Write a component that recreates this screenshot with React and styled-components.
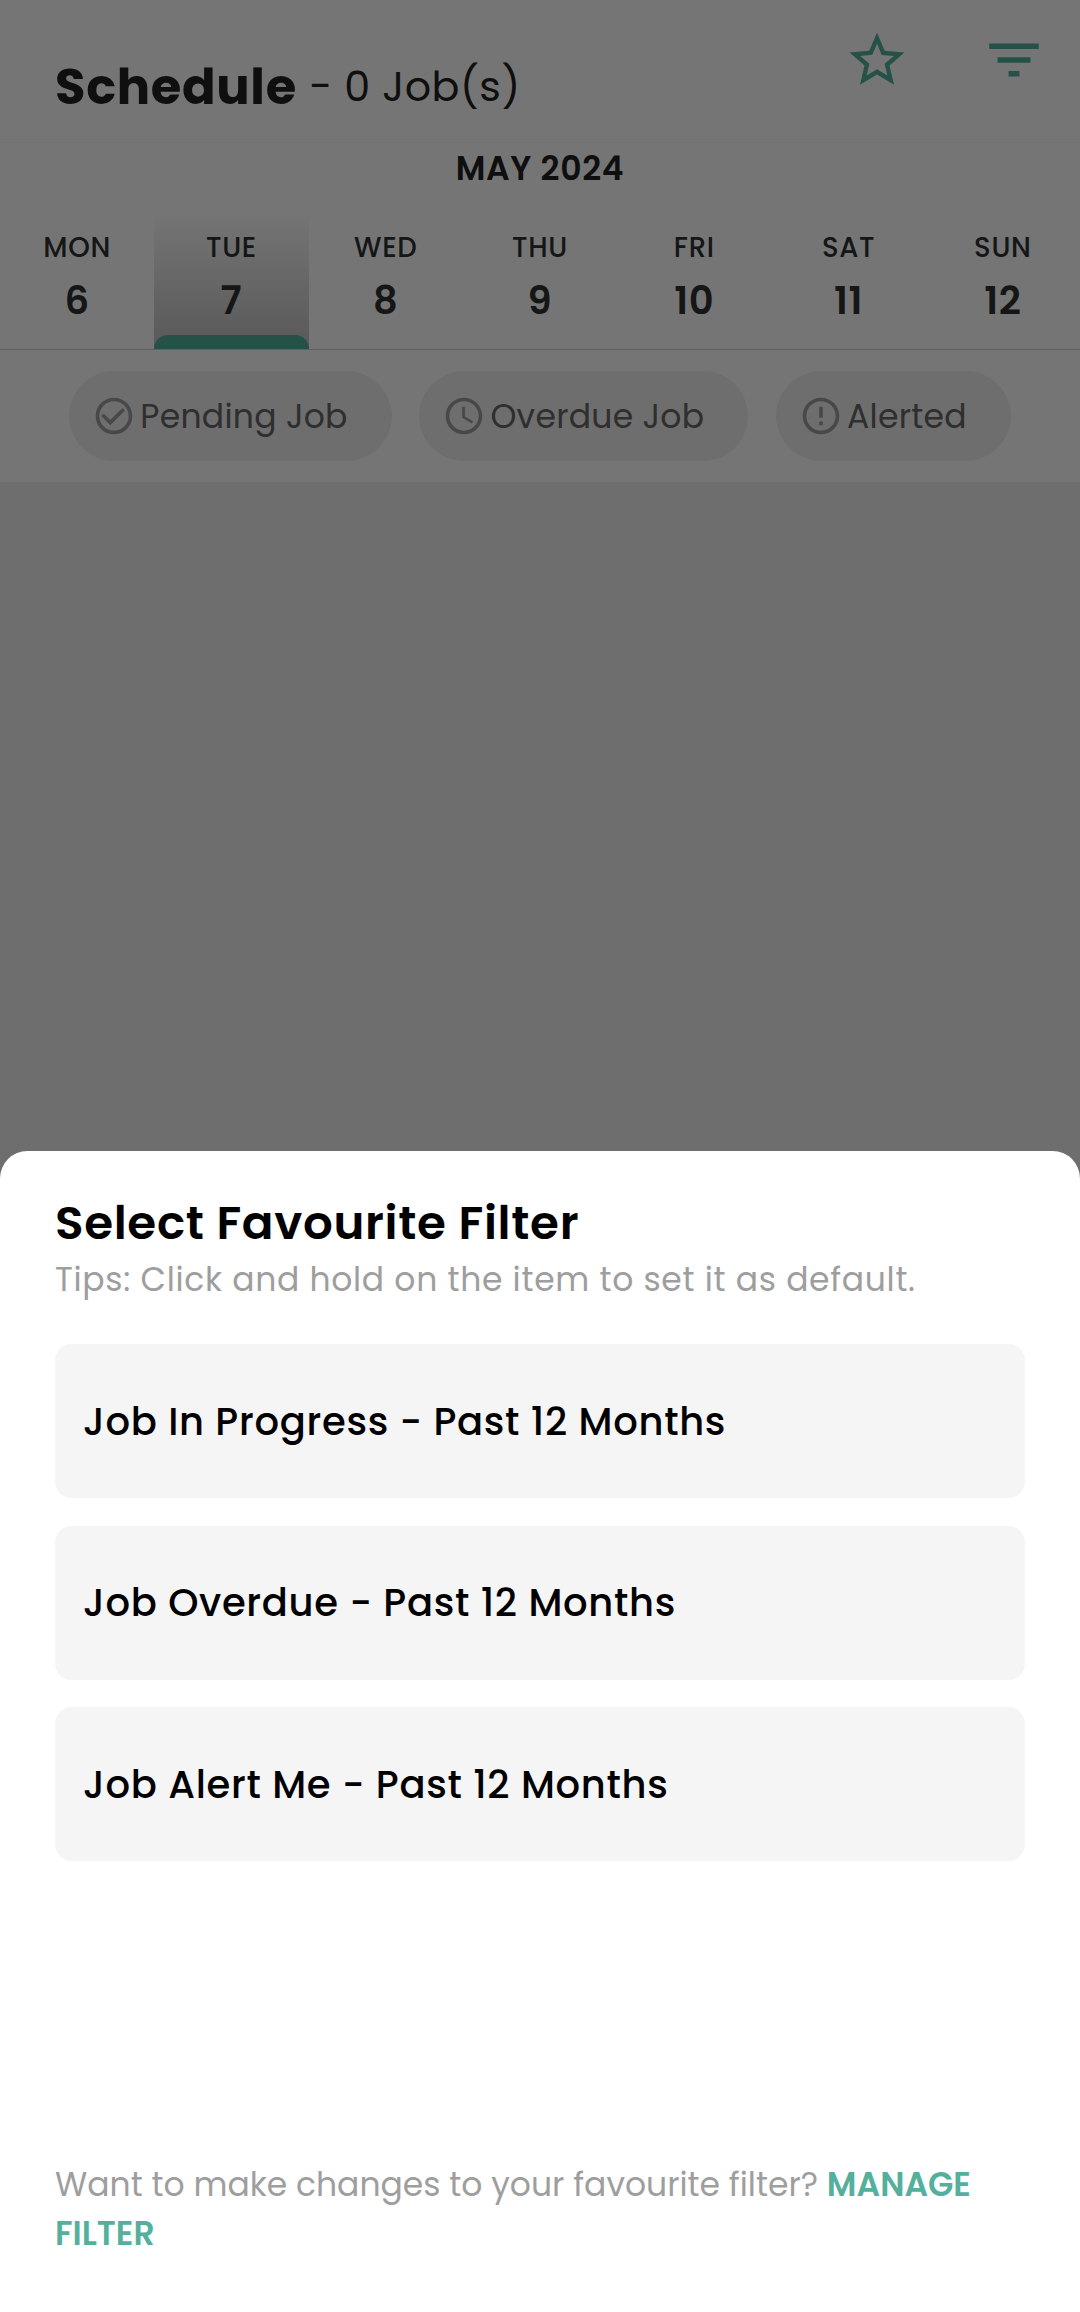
import React from "react";
import styled, { createGlobalStyle } from "styled-components";
import {
  MdStarBorder,
  MdFilterList,
  MdCheckCircleOutline,
  MdAccessTime,
  MdErrorOutline,
} from "react-icons/md";

const TEAL = "#54b09d";

const GlobalStyle = createGlobalStyle`
  *, *::before, *::after { box-sizing: border-box; }
  body {
    margin: 0;
    font-family: Poppins, Inter, "Open Sans", sans-serif;
    letter-spacing: 0.6875px;
  }
  button {
    font: inherit;
    letter-spacing: inherit;
    color: inherit;
    border: 0;
    padding: 0;
    background: none;
  }
`;

const Screen = styled.div`
  position: relative;
  width: 1080px;
  height: 2312px;
  overflow: hidden;
  background: #f0f0f0;
`;

const Header = styled.header`
  display: flex;
  justify-content: space-between;
  align-items: flex-start;
  height: 140px;
  padding: 26.5px 33px 0 55px;
  background: #fff;
  border-bottom: 1px solid #f8f8f8;
  color: #222;
`;

const TitleGroup = styled.div`
  display: flex;
  align-items: center;
  height: 60px;
  margin-top: 30px;
`;

const Title = styled.h1`
  margin: 0;
  font-size: 49.5px;
  font-weight: 700;
  line-height: 60px;
`;

const JobCount = styled.span`
  margin-left: 1px;
  font-size: 41.25px;
  line-height: 60px;
  letter-spacing: 0.55px;
  white-space: pre;
`;

const Actions = styled.div`
  display: flex;
  gap: 71px;
`;

const IconButton = styled.button`
  display: flex;
  color: ${TEAL};
  font-size: 66px;
`;

const Calendar = styled.section`
  display: flex;
  flex-direction: column;
  height: 210px;
  background: #fff;
  border-bottom: 1px solid #d2d2d2;
`;

const Month = styled.h2`
  margin: 0;
  padding-top: 4px;
  height: 72px;
  color: #222;
  font-size: 33px;
  font-weight: 600;
  line-height: 49px;
  text-align: center;
`;

const Week = styled.div`
  display: grid;
  grid-template-columns: repeat(7, 1fr);
  flex: 1;
`;

const Day = styled.button`
  display: flex;
  flex-direction: column;
  align-items: center;
  padding-top: 15px;
  color: #2e3232;
  background: ${(p) =>
    p.$selected ? "linear-gradient(to bottom, #ffffff, #c2c2c2)" : "none"};

  &::after {
    content: "";
    width: 100%;
    height: 14.5px;
    margin-top: auto;
    border-radius: 14px 14px 0 0;
    background: ${(p) => (p.$selected ? TEAL : "transparent")};
  }
`;

const DayName = styled.span`
  font-size: 27.5px;
  font-weight: 500;
  line-height: 41px;
`;

const DayNumber = styled.span`
  margin-top: 4px;
  font-size: 38.5px;
  font-weight: 600;
  line-height: 58px;
`;

const Chips = styled.div`
  display: flex;
  justify-content: center;
  gap: 27.5px;
  height: 132px;
  padding-top: 21px;
  background: #fff;
`;

const Chip = styled.button`
  display: flex;
  align-items: center;
  gap: 4px;
  height: 90px;
  padding: 0 44px 0 23.25px;
  border-radius: 45px;
  background: #f0f0f0;
  color: #666;
  font-size: 33px;
  line-height: 50px;
  letter-spacing: 0.275px;

  svg {
    width: 44px;
    height: 44px;
    color: #9e9e9e;
  }
`;

const ChipLabel = styled.span`
  padding-top: 2px;
`;

const Scrim = styled.div`
  position: absolute;
  inset: 0;
  display: flex;
  flex-direction: column;
  justify-content: flex-end;
  background: rgba(0, 0, 0, 0.54);
`;

const Sheet = styled.section`
  display: flex;
  flex-direction: column;
  height: 1161px;
  padding: 39.5px 55px 54px;
  border-radius: 27.5px 27.5px 0 0;
  background: #fff;
  color: #000;
`;

const SheetTitle = styled.h2`
  margin: 0;
  font-size: 46.75px;
  font-weight: 600;
  line-height: 64px;
`;

const Tips = styled.p`
  margin: 0 0 39.5px;
  color: #9e9e9e;
  font-size: 33px;
  line-height: 50px;
`;

const FilterList = styled.div`
  display: flex;
  flex-direction: column;
  gap: 27.5px;
`;

const FilterItem = styled.button`
  height: 154px;
  padding: 1px 28px 0;
  border-radius: 16.5px;
  background: #f5f5f5;
  font-size: 38.5px;
  font-weight: 500;
  line-height: 58px;
  text-align: left;
`;

const Footer = styled.p`
  margin: auto 0 0;
  color: #9e9e9e;
  font-size: 33px;
  line-height: 49px;
  letter-spacing: 0;
`;

const ManageLink = styled.span`
  color: ${TEAL};
  font-weight: 600;
`;

const days = [
  ["MON", 6],
  ["TUE", 7],
  ["WED", 8],
  ["THU", 9],
  ["FRI", 10],
  ["SAT", 11],
  ["SUN", 12],
];

const chips = [
  { label: "Pending Job", Icon: MdCheckCircleOutline },
  { label: "Overdue Job", Icon: MdAccessTime },
  { label: "Alerted", Icon: MdErrorOutline },
];

const filters = [
  "Job In Progress - Past 12 Months",
  "Job Overdue - Past 12 Months",
  "Job Alert Me - Past 12 Months",
];

export default function App() {
  return (
    <>
      <GlobalStyle />
      <Screen>
        <Header>
          <TitleGroup>
            <Title>Schedule</Title>
            <JobCount> - 0 Job(s)</JobCount>
          </TitleGroup>
          <Actions>
            <IconButton aria-label="Favourite filters">
              <MdStarBorder />
            </IconButton>
            <IconButton aria-label="Filter">
              <MdFilterList />
            </IconButton>
          </Actions>
        </Header>
        <Calendar>
          <Month>MAY 2024</Month>
          <Week>
            {days.map(([name, number]) => (
              <Day key={name} $selected={number === 7}>
                <DayName>{name}</DayName>
                <DayNumber>{number}</DayNumber>
              </Day>
            ))}
          </Week>
        </Calendar>
        <Chips>
          {chips.map(({ label, Icon }) => (
            <Chip key={label}>
              <Icon />
              <ChipLabel>{label}</ChipLabel>
            </Chip>
          ))}
        </Chips>
        <Scrim>
          <Sheet>
            <SheetTitle>Select Favourite Filter</SheetTitle>
            <Tips>Tips: Click and hold on the item to set it as default.</Tips>
            <FilterList>
              {filters.map((name) => (
                <FilterItem key={name}>{name}</FilterItem>
              ))}
            </FilterList>
            <Footer>
              Want to make changes to your favourite filter?{" "}
              <ManageLink>MANAGE</ManageLink> <ManageLink>FILTER</ManageLink>
            </Footer>
          </Sheet>
        </Scrim>
      </Screen>
    </>
  );
}
